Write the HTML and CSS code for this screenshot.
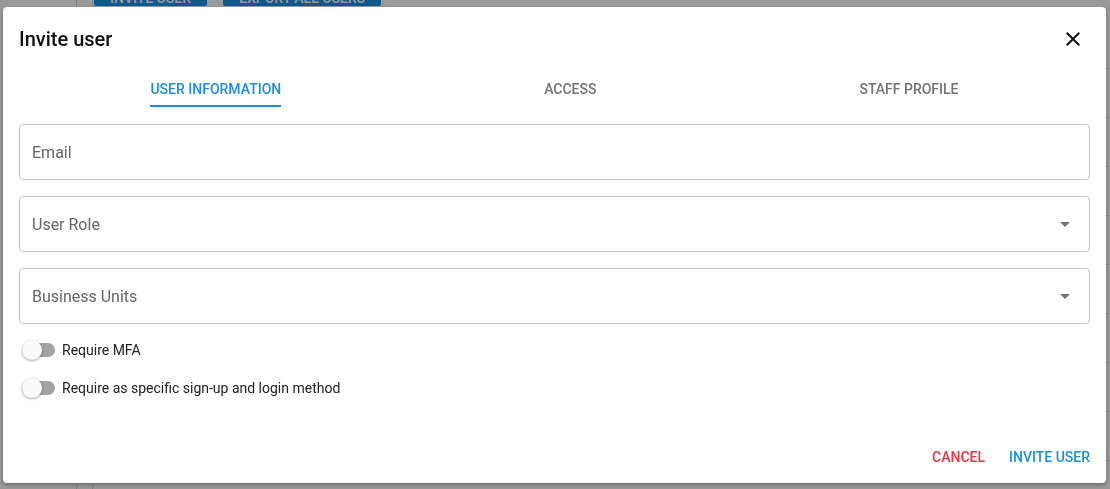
FILE: index.html
```html
<!DOCTYPE html>
<html lang="en">
<head>
    <meta charset="UTF-8">
    <meta name="viewport" content="width=device-width, initial-scale=1.0">
    <title>Invite user</title>
    <link rel="stylesheet" href="styles.css">
</head>
<body>
    <div class="app">
        <aside class="sidebar"></aside>
        <aside class="subnav"></aside>
        <main class="main">
            <div class="toolbar">
                <button class="primary-btn">INVITE USER</button>
                <button class="primary-btn">EXPORT ALL USERS</button>
            </div>
            <div class="rows">
                <div class="row"></div>
                <div class="row"></div>
                <div class="row"></div>
                <div class="row"></div>
                <div class="row"></div>
                <div class="row"></div>
                <div class="row"></div>
                <div class="row"></div>
                <div class="row"></div>
            </div>
        </main>
    </div>

    <div class="backdrop"></div>

    <div class="dialog">
        <header class="dialog-header">
            <h2 class="dialog-title">Invite user</h2>
            <button class="close-btn" aria-label="close">
                <svg viewBox="0 0 24 24" width="24" height="24"><path d="M19 6.41L17.59 5 12 10.59 6.41 5 5 6.41 10.59 12 5 17.59 6.41 19 12 13.41 17.59 19 19 17.59 13.41 12z"/></svg>
            </button>
        </header>

        <nav class="tabs">
            <span class="tab active">USER INFORMATION</span>
            <span class="tab">ACCESS</span>
            <span class="tab">STAFF PROFILE</span>
        </nav>

        <section class="fields">
            <div class="field">Email</div>
            <div class="field">
                <span>User Role</span>
                <svg class="arrow" viewBox="0 0 24 24" width="24" height="24"><path d="M7 10l5 5 5-5z"/></svg>
            </div>
            <div class="field">
                <span>Business Units</span>
                <svg class="arrow" viewBox="0 0 24 24" width="24" height="24"><path d="M7 10l5 5 5-5z"/></svg>
            </div>
        </section>

        <section class="switches">
            <label class="switch-row"><span class="switch"></span>Require MFA</label>
            <label class="switch-row"><span class="switch"></span>Require as specific sign-up and login method</label>
        </section>

        <footer class="dialog-actions">
            <button class="action-btn cancel">CANCEL</button>
            <button class="action-btn confirm">INVITE USER</button>
        </footer>
    </div>
</body>
</html>
```

FILE: styles.css
```css
body {
    font-family: Roboto, "Liberation Sans", Arial, sans-serif;
    margin: 0;
    height: 489px;
    overflow: hidden;
    background: #fff;
}

.app {
    display: flex;
    height: 489px;
}

.sidebar {
    width: 76px;
    border-right: 1px solid #d6d6d6;
}

.subnav {
    width: 15px;
    border-right: 1px solid #d6d6d6;
}

.main {
    flex: 1;
}

.toolbar {
    display: flex;
    gap: 16px;
    margin-top: -24px;
    padding-left: 1px;
}

.primary-btn {
    height: 30px;
    padding: 14px 16px 0;
    border: none;
    border-radius: 0 0 2px 2px;
    background: #1a95ee;
    color: #fff;
    font-family: inherit;
    font-size: 14px;
    font-weight: 500;
    line-height: 16px;
}

.rows {
    margin-top: 14px;
}

.row {
    height: 48px;
    border-bottom: 1px solid #e3e3e3;
}

.backdrop {
    position: fixed;
    inset: 0;
    background: rgba(0, 0, 0, 0.4);
}

/* dialog */
.dialog {
    position: fixed;
    left: 3px;
    top: 7px;
    width: 1103px;
    height: 476px;
    background: #fff;
    border-radius: 4px;
    box-shadow: 0 2px 4px rgba(0, 0, 0, 0.3);
    display: flex;
    flex-direction: column;
}

.dialog-header {
    display: flex;
    justify-content: space-between;
    align-items: center;
    padding: 18px 21px 0 16px;
}

.dialog-title {
    margin: 0;
    font-size: 20px;
    font-weight: 500;
    line-height: 28px;
    color: #111;
}

.close-btn {
    width: 24px;
    height: 24px;
    padding: 0;
    border: none;
    background: none;
}

.close-btn svg {
    display: block;
    fill: #111;
}

.tabs {
    display: flex;
    justify-content: space-around;
    margin: 26px 16px 0;
}

.tab {
    font-size: 14px;
    font-weight: 500;
    line-height: 20px;
    padding-bottom: 6px;
    border-bottom: 2px solid transparent;
    color: #737373;
}

.tab.active {
    color: #1b8fe6;
    border-bottom-color: #1b8fe6;
}

.fields {
    display: flex;
    flex-direction: column;
    gap: 16px;
    padding: 17px 16px 0;
}

.field {
    box-sizing: border-box;
    height: 56px;
    border: 1px solid #c4c4c4;
    border-radius: 4px;
    display: flex;
    align-items: center;
    justify-content: space-between;
    padding: 0 12px;
    font-size: 16px;
    color: #666;
}

.arrow {
    fill: #757575;
}

.switches {
    padding: 7px 16px 0;
}

.switch-row {
    display: flex;
    align-items: center;
    height: 38px;
    font-size: 14px;
    color: #222;
}

.switch {
    position: relative;
    width: 33px;
    height: 14px;
    margin: 0 7px 0 3px;
    border-radius: 7px;
    background: #a3a3a3;
}

.switch::after {
    content: "";
    position: absolute;
    left: 0;
    top: -3px;
    width: 20px;
    height: 20px;
    border-radius: 50%;
    background: #fafafa;
    box-shadow: 0 1px 3px rgba(0, 0, 0, 0.35);
}

.dialog-actions {
    margin-top: auto;
    display: flex;
    justify-content: flex-end;
    gap: 8px;
    padding: 8px;
}

.action-btn {
    padding: 8px;
    border: none;
    background: none;
    font-family: inherit;
    font-size: 14px;
    font-weight: 500;
    line-height: 20px;
}

.cancel {
    color: #e8383d;
}

.confirm {
    color: #1b8fe6;
}
```
